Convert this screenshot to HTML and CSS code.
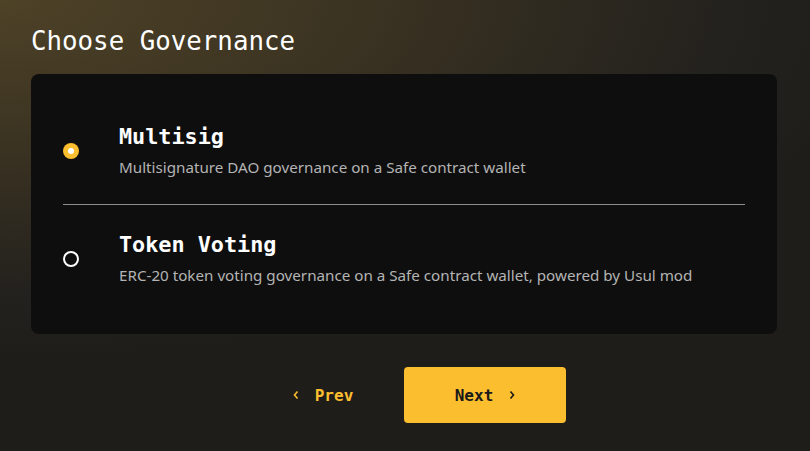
FILE: index.html
```html
<!DOCTYPE html>
<html lang="en">
<head>
<meta charset="utf-8">
<title>Choose Governance</title>
<link rel="stylesheet" href="styles.css">
</head>
<body>
<main class="page">
  <h1 class="title">Choose Governance</h1>
  <section class="card">
    <label class="option">
      <span class="radio radio-on"><span class="radio-dot"></span></span>
      <span class="option-text">
        <span class="option-name">Multisig</span>
        <span class="option-desc">Multisignature DAO governance on a Safe contract wallet</span>
      </span>
    </label>
    <div class="divider"></div>
    <label class="option">
      <span class="radio radio-off"></span>
      <span class="option-text">
        <span class="option-name">Token Voting</span>
        <span class="option-desc">ERC-20 token voting governance on a Safe contract wallet, powered by Usul mod</span>
      </span>
    </label>
  </section>
  <nav class="actions">
    <button class="btn btn-prev">
      <svg class="chev" width="6" height="10" viewBox="0 0 6 10"><path d="M4.5 1.5 L1.5 5 L4.5 8.5" fill="none" stroke="currentColor" stroke-width="1.6"/></svg>
      <span>Prev</span>
    </button>
    <button class="btn btn-next">
      <span>Next</span>
      <svg class="chev" width="6" height="10" viewBox="0 0 6 10"><path d="M1.5 1.5 L4.5 5 L1.5 8.5" fill="none" stroke="currentColor" stroke-width="1.6"/></svg>
    </button>
  </nav>
</main>
</body>
</html>
```
FILE: styles.css
```css
html, body {
  margin: 0;
  padding: 0;
  height: 100%;
}
body {
  background: radial-gradient(ellipse 900px 360px at 0 0, #4e4227 0%, #3b3322 40%, #24221e 80%, #1e1d1a 100%), #1e1d1a;
  background-color: #1e1d1a;
  color: #ffffff;
  font-family: "Noto Sans", "Liberation Sans", sans-serif;
  overflow: hidden;
}
.page {
  padding: 24px 33px 0 31px;
  display: flex;
  flex-direction: column;
}
.title {
  margin: 0;
  font-family: "DejaVu Sans Mono", "Liberation Mono", monospace;
  font-size: 25.8px;
  font-weight: 400;
  line-height: 34px;
  color: #ffffff;
}
.card {
  margin-top: 16px;
  background: #0e0e0e;
  border-radius: 8px;
  padding: 23px 32px 22px;
  display: flex;
  flex-direction: column;
}
.option {
  display: flex;
  align-items: center;
  gap: 40px;
  padding: 26px 0;
}
.radio {
  width: 16px;
  height: 16px;
  border-radius: 50%;
  box-sizing: border-box;
  flex: none;
  display: flex;
  align-items: center;
  justify-content: center;
}
.radio-on {
  background: #fbbe2e;
}
.radio-dot {
  width: 6px;
  height: 6px;
  border-radius: 50%;
  background: #ffffff;
}
.radio-off {
  border: 2px solid #ffffff;
}
.option-text {
  display: flex;
  flex-direction: column;
  gap: 5px;
}
.option-name {
  font-family: "DejaVu Sans Mono", "Liberation Mono", monospace;
  font-size: 21.8px;
  font-weight: 700;
  line-height: 28px;
  color: #ffffff;
}
.option-desc {
  font-size: 15.2px;
  line-height: 22px;
  color: #b4b4b4;
}
.divider {
  height: 1px;
  background: #8c8c8c;
}
.actions {
  margin-top: 33px;
  display: flex;
  justify-content: center;
}
.btn {
  width: 162px;
  height: 56px;
  border: none;
  border-radius: 4px;
  font-family: "DejaVu Sans Mono", "Liberation Mono", monospace;
  font-size: 16px;
  font-weight: 700;
  display: flex;
  align-items: center;
  justify-content: center;
  gap: 16px;
  cursor: pointer;
  padding: 0;
}
.btn-prev {
  background: transparent;
  color: #fbbe2e;
}
.btn-next {
  background: #fbbe2e;
  color: #1a1a1a;
}
.chev {
  display: block;
}
```
